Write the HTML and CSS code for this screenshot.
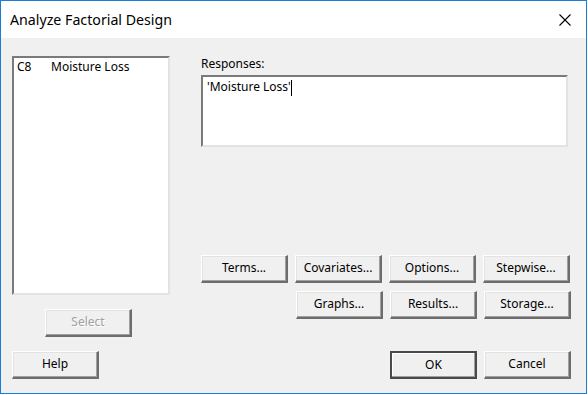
FILE: index.html
```html
<!DOCTYPE html>
<html>
<head>
<meta charset="utf-8">
<link rel="stylesheet" href="styles.css">
</head>
<body>
<div class="dialog">
  <div class="titlebar">
    <span class="title">Analyze Factorial Design</span>
    <svg class="close" width="12" height="12" viewBox="0 0 12 12"><path d="M0.5 0.5 L11.5 11.5 M11.5 0.5 L0.5 11.5" stroke="#000" stroke-width="1.1" fill="none"/></svg>
  </div>
  <div class="content">
    <div class="main">
      <div class="leftcol">
        <div class="listbox">
          <div class="listrow"><span class="col">C8</span><span>Moisture Loss</span></div>
        </div>
        <button class="btn select" disabled>Select</button>
      </div>
      <div class="rightcol">
        <div class="label">Responses:</div>
        <div class="textbox"><span>'Moisture Loss'</span><span class="caret"></span></div>
        <div class="spacer"></div>
        <div class="btnrow">
          <button class="btn">Terms...</button>
          <button class="btn">Covariates...</button>
          <button class="btn">Options...</button>
          <button class="btn">Stepwise...</button>
        </div>
        <div class="btnrow second">
          <button class="btn">Graphs...</button>
          <button class="btn">Results...</button>
          <button class="btn">Storage...</button>
        </div>
      </div>
    </div>
    <div class="footer">
      <button class="btn">Help</button>
      <div class="footright">
        <button class="btn default">OK</button>
        <button class="btn">Cancel</button>
      </div>
    </div>
  </div>
</div>
<div class="below"></div>
</body>
</html>
```
FILE: styles.css
```css
* { box-sizing: border-box; }
html, body { margin: 0; padding: 0; }
body {
  width: 588px;
  height: 395px;
  background: #ffffff;
  font-family: "Noto Sans", "Open Sans", sans-serif;
  font-size: 12px;
  color: #000;
  overflow: hidden;
}
.dialog {
  width: 587px;
  height: 394px;
  border: 1px solid #1a7fd4;
  background: #f0f0f0;
  display: flex;
  flex-direction: column;
}
.titlebar {
  height: 37px;
  background: #ffffff;
  display: flex;
  align-items: center;
  justify-content: space-between;
  padding: 0 15px 0 9px;
  flex: none;
}
.title {
  font-size: 14.2px;
  line-height: 20px;
  margin-top: 1px;
}
.close { display: block; }
.content {
  flex: 1;
  display: flex;
  flex-direction: column;
  padding: 18px 0 0 11px;
}
.main {
  display: flex;
}
.leftcol {
  width: 158px;
  display: flex;
  flex-direction: column;
}
.listbox {
  height: 239px;
  background: #fff;
  border-style: solid;
  border-width: 2px;
  border-color: #7a7a7a #e3e3e3 #e3e3e3 #7a7a7a;
  padding: 0 2px;
}
.listrow {
  display: flex;
  line-height: 16px;
  padding-top: 1px;
}
.listrow .col { width: 35px; padding-left: 1px; }
.btn {
  font-family: "Noto Sans", "Open Sans", sans-serif;
  font-size: 12px;
  color: #000;
  width: 87px;
  height: 28px;
  padding: 0 0 1px 0;
  background: #f0f0f0;
  border-style: solid;
  border-width: 1px 2px 2px 1px;
  border-color: #ffffff #6d6d6d #6d6d6d #ffffff;
  box-shadow: inset -1px -1px 0 #a0a0a0, inset 1px 1px 0 #e3e3e3;
  margin: 0;
  line-height: 16px;
}
.btn.select {
  margin: 14px 0 0 33px;
  color: #a0a0a0;
  text-shadow: 1px 1px 0 #fff;
}
.btn.default {
  border-width: 2px;
  border-color: #4a4a4a;
  box-shadow: inset -1px -1px 0 #a0a0a0, inset 1px 1px 0 #ffffff;
}
.rightcol {
  margin-left: 31px;
  width: 371px;
  display: flex;
  flex-direction: column;
}
.label {
  line-height: 16px;
  height: 19px;
}
.textbox {
  width: 367px;
  height: 72px;
  background: #fff;
  border-style: solid;
  border-width: 2px;
  border-color: #7a7a7a #e3e3e3 #e3e3e3 #7a7a7a;
  padding: 2px 4px;
  line-height: 16px;
  display: flex;
  align-items: flex-start;
}
.caret {
  width: 1px;
  height: 16px;
  background: #000;
  margin-top: 1px;
}
.spacer { height: 108px; }
.btnrow {
  display: flex;
  gap: 7px;
}
.btnrow.second {
  justify-content: flex-end;
  margin-top: 8px;
  padding-right: 1px;
}
.footer {
  display: flex;
  justify-content: space-between;
  margin-top: 14px;
  padding-right: 15px;
}
.footright { display: flex; gap: 7px; }
.below { height: 1px; }
```
